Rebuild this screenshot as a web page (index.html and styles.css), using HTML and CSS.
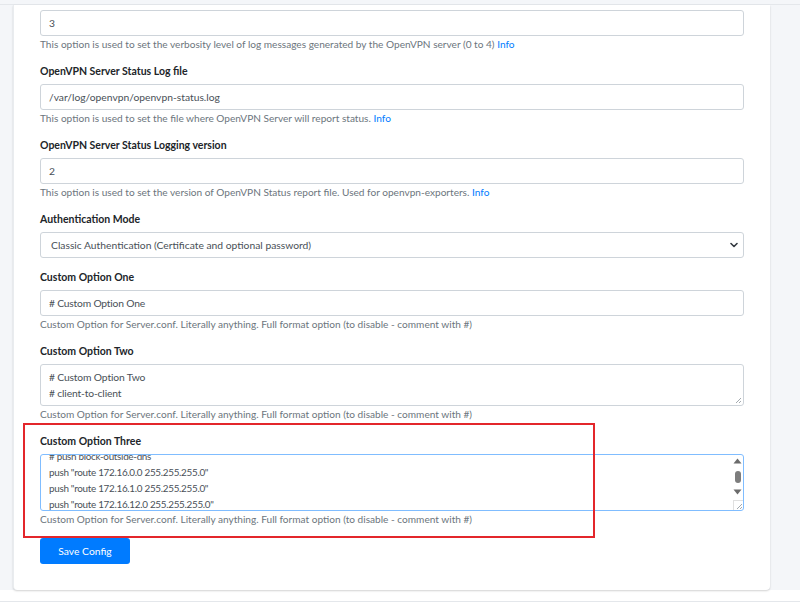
FILE: index.html
```
<!DOCTYPE html>
<html lang="en">
<head>
<meta charset="utf-8">
<title>OpenVPN Settings</title>
<link rel="stylesheet" href="styles.css">
</head>
<body>
<div class="topbar"></div>
<div class="wrapper">
  <div class="card">
    <div class="group first">
      <div class="input">3</div>
      <div class="help">This option is used to set the verbosity level of log messages generated by the OpenVPN server (0 to 4) <a class="link">Info</a></div>
    </div>
    <div class="group">
      <div class="label">OpenVPN Server Status Log file</div>
      <div class="input">/var/log/openvpn/openvpn-status.log</div>
      <div class="help">This option is used to set the file where OpenVPN Server will report status. <a class="link">Info</a></div>
    </div>
    <div class="group">
      <div class="label">OpenVPN Server Status Logging version</div>
      <div class="input">2</div>
      <div class="help">This option is used to set the version of OpenVPN Status report file. Used for openvpn-exporters. <a class="link">Info</a></div>
    </div>
    <div class="group tight">
      <div class="label">Authentication Mode</div>
      <div class="input select"><span>Classic Authentication (Certificate and optional password)</span>
        <svg class="chev" width="8" height="6" viewBox="0 0 8 6"><path d="M1 1.5 L4 4.5 L7 1.5" fill="none" stroke="#343a40" stroke-width="1.6" stroke-linecap="round" stroke-linejoin="round"/></svg>
      </div>
    </div>
    <div class="group">
      <div class="label">Custom Option One</div>
      <div class="input compact">#&nbsp;Custom Option One</div>
      <div class="help">Custom Option for Server.conf. Literally anything. Full format option (to disable - comment with #)</div>
    </div>
    <div class="group">
      <div class="label">Custom Option Two</div>
      <div class="textarea two">
        <div class="lines">
          <div>#&nbsp;Custom Option Two</div>
          <div>#&nbsp;client-to-client</div>
        </div>
        <svg class="grip" width="8" height="8" viewBox="0 0 8 8"><path d="M7 2 L2 7 M7 5 L5 7" stroke="#9aa0a6" stroke-width="0.9"/></svg>
      </div>
      <div class="help">Custom Option for Server.conf. Literally anything. Full format option (to disable - comment with #)</div>
    </div>
    <div class="group marked">
      <div class="annot"></div>
      <div class="label">Custom Option Three</div>
      <div class="textarea three">
        <div class="viewport">
          <div class="lines scrolled">
            <div>#&nbsp;push block-outside-dns</div>
            <div>push "route 172.16.0.0 255.255.255.0"</div>
            <div>push "route 172.16.1.0 255.255.255.0"</div>
            <div>push "route 172.16.12.0 255.255.255.0"</div>
          </div>
        </div>
        <div class="scrollbar">
          <svg class="arrow" width="9" height="6" viewBox="0 0 9 6"><path d="M4.5 0.5 L8.5 5.5 L0.5 5.5 Z" fill="#6b6b6b"/></svg>
          <div class="thumb"></div>
          <svg class="arrow" width="9" height="6" viewBox="0 0 9 6"><path d="M0.5 0.5 L8.5 0.5 L4.5 5.5 Z" fill="#6b6b6b"/></svg>
          <div class="corner"><svg width="8" height="8" viewBox="0 0 8 8"><path d="M7 2 L2 7 M7 5 L5 7" stroke="#9aa0a6" stroke-width="0.9"/></svg></div>
        </div>
      </div>
      <div class="help">Custom Option for Server.conf. Literally anything. Full format option (to disable - comment with #)</div>
    </div>
    <button class="btn">Save Config</button>
  </div>
</div>
<div class="footer"></div>
</body>
</html>
```
FILE: styles.css
```
html { background: #ffffff; }
body {
  margin: 0;
  font-family: "Lato", "Noto Sans", sans-serif;
  color: #212529;
}
.topbar {
  height: 4px;
  background: #f4f6f9;
  border-bottom: 1px solid #e4e7eb;
}
.wrapper {
  background: #f4f6f9;
  padding: 0 30px 0 13px;
}
.card {
  background: #ffffff;
  border-left: 1px solid #e9ecef;
  border-radius: 0 0 4px 4px;
  box-shadow: 0 1px 2px rgba(0,0,0,0.18);
  padding: 5px 26px 26px 26px;
}
.group { margin-bottom: 13px; }
.group.tight { margin-bottom: 12px; }
.group.marked { margin-bottom: 12px; }
.label {
  font-size: 10.5px;
  font-weight: 700;
  line-height: 14px;
  margin-bottom: 6px;
  color: #212529;
}
.input {
  height: 26px;
  box-sizing: border-box;
  border: 1px solid #ced4da;
  border-radius: 3px;
  padding: 0 8px;
  font-size: 10.3px;
  line-height: 24px;
  color: #495057;
}
.input.compact { letter-spacing: -0.2px; }
.select {
  display: flex;
  align-items: center;
  justify-content: space-between;
  padding: 0 5px 0 10px;
}
.chev { display: block; }
.help {
  margin-top: 2px;
  font-size: 10.1px;
  line-height: 13px;
  color: #6c757d;
}
.link { color: #007bff; text-decoration: none; }
.textarea {
  box-sizing: border-box;
  border: 1px solid #ced4da;
  border-radius: 3px;
  font-size: 10.3px;
  line-height: 16px;
  color: #495057;
  display: flex;
}
.textarea.two {
  height: 42px;
  padding: 4px 8px 0 8px;
  justify-content: space-between;
  letter-spacing: -0.15px;
}
.grip { align-self: flex-end; margin-right: -7px; margin-bottom: 1px; }
.textarea.three {
  height: 57px;
  border-color: #80bdff;
  font-size: 9.9px;
  letter-spacing: -0.3px;
}
.viewport {
  flex: 1;
  overflow: hidden;
  padding-left: 8px;
}
.scrolled { margin-top: -7px; }
.scrollbar {
  width: 11px;
  display: flex;
  flex-direction: column;
  align-items: center;
  padding-top: 3px;
}
.arrow { display: block; }
.thumb {
  width: 6px;
  height: 12px;
  border-radius: 3px;
  background: #7d7d7d;
  margin: 7px 0 6px 0;
}
.corner {
  margin-top: auto;
  width: 10px;
  height: 10px;
  box-sizing: border-box;
  border-left: 1px solid #e0e0e0;
  border-top: 1px solid #e0e0e0;
  display: flex;
  align-items: flex-end;
  justify-content: flex-end;
}
.corner svg { display: block; }
.marked { position: relative; }
.annot {
  position: absolute;
  left: -17px;
  top: -11px;
  width: 572px;
  height: 115px;
  box-sizing: border-box;
  border: 2px solid #e3262b;
  pointer-events: none;
}
.btn {
  display: block;
  width: 90px;
  height: 26px;
  border: 0;
  border-radius: 3px;
  background: #007bff;
  color: #ffffff;
  font-family: inherit;
  font-size: 10.3px;
  padding: 0;
}
.footer {
  height: 11px;
  border-bottom: 1px solid #e4e7eb;
}
```
